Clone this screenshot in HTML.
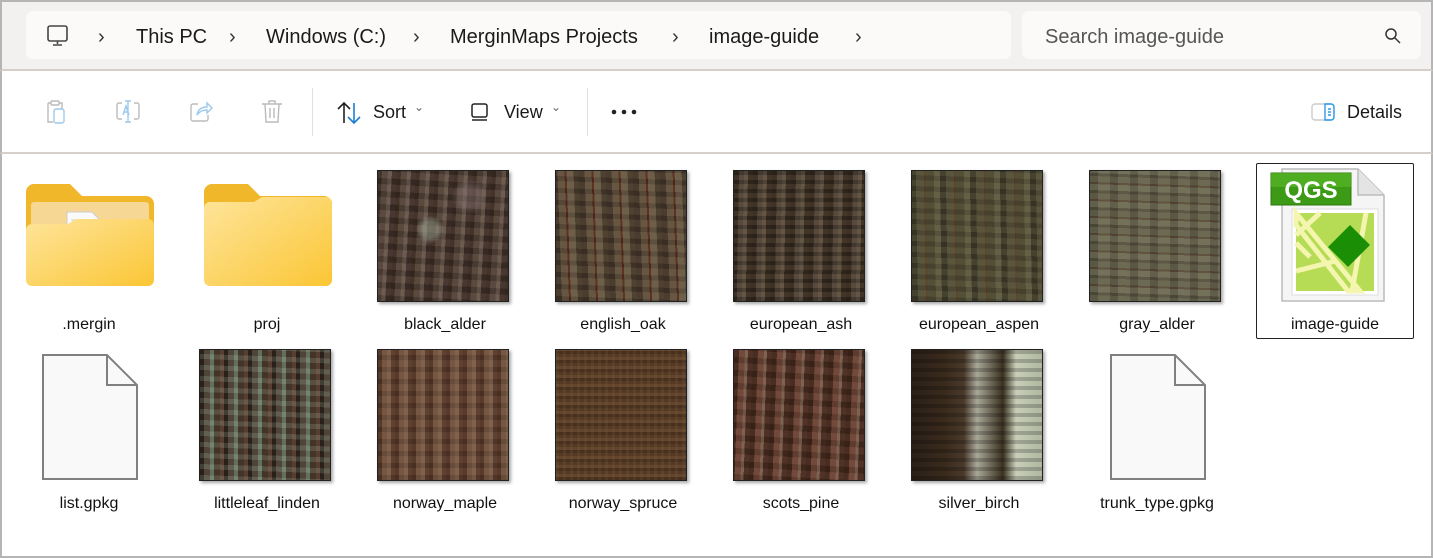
<!DOCTYPE html>
<html><head><meta charset="utf-8"><style>
*{margin:0;padding:0;box-sizing:border-box}
body{width:1433px;height:558px;overflow:hidden;background:#fff;font-family:"Segoe UI","Liberation Sans",sans-serif;position:relative;color:#1a1a1a}
.a{position:absolute}
.top{left:0;top:0;width:1433px;height:71px;background:#f3f1ef;border-top:2px solid #b5b5b5;border-bottom:2px solid #d6cfc9;border-left:2px solid #b5b5b5;border-right:2px solid #b5b5b5}
.addr{left:26px;top:11px;width:985px;height:48px;background:#fbfaf9;border-radius:7px}
.srch{left:1022px;top:11px;width:399px;height:48px;background:#fbfaf9;border-radius:7px}
.t{font-size:20px;line-height:24px}
.tb{left:0;top:71px;width:1433px;height:83px;background:#fff;border-bottom:2px solid #d6cfc9;border-left:2px solid #b5b5b5;border-right:2px solid #b5b5b5}
.lbl{font-size:16px;width:178px;text-align:center;color:#111}
.th{width:132px;height:132px;box-shadow:2px 2px 3px rgba(0,0,0,.35);border:1px solid #222}
.th>div{width:100%;height:100%}
.frame{left:0;top:154px;width:1433px;height:404px;border-left:2px solid #b5b5b5;border-right:2px solid #b5b5b5;border-bottom:2px solid #b5b5b5}
.r1{top:316px}.r2{top:495px}
</style></head><body>
<div class="a top"></div>
<div class="a addr"></div>
<div class="a srch"></div>
<svg class="a" style="left:46px;top:24px" width="24" height="24" viewBox="0 0 24 24" fill="none" stroke="#444" stroke-width="1.6"><rect x="2" y="2" width="19" height="15" rx="2"/><path d="M11.5 17v3M7 21h9"/></svg>
<div class="a t" style="left:98px;top:25px;color:#333">›</div>
<div class="a t" style="left:136px;top:25px">This PC</div>
<div class="a t" style="left:229px;top:25px;color:#333">›</div>
<div class="a t" style="left:266px;top:25px">Windows (C:)</div>
<div class="a t" style="left:413px;top:25px;color:#333">›</div>
<div class="a t" style="left:450px;top:25px">MerginMaps Projects</div>
<div class="a t" style="left:672px;top:25px;color:#333">›</div>
<div class="a t" style="left:709px;top:25px">image-guide</div>
<div class="a t" style="left:855px;top:25px;color:#333">›</div>
<div class="a t" style="left:1045px;top:25px;color:#555">Search image-guide</div>
<svg class="a" style="left:1384px;top:27px" width="18" height="18" viewBox="0 0 18 18" fill="none" stroke="#333" stroke-width="1.5"><circle cx="7" cy="7" r="5"/><path d="M11 11l5 5"/></svg>
<div class="a tb"></div>
<svg class="a" style="left:44px;top:99px" width="24" height="26" viewBox="0 0 24 26" fill="none" stroke-width="1.4"><path d="M4 4h3M15 4h3V10M4 4v19h5" stroke="#bbb"/><rect x="7" y="2" width="8" height="4" rx="1" stroke="#bbb"/><rect x="10" y="10" width="10" height="14" rx="2" stroke="#9cc9ee"/></svg>
<svg class="a" style="left:115px;top:100px" width="26" height="24" viewBox="0 0 26 24" fill="none" stroke-width="1.4"><path d="M7 3H4a2 2 0 0 0-2 2v12a2 2 0 0 0 2 2h3M19 3h3a2 2 0 0 1 2 2v12a2 2 0 0 1-2 2h-3" stroke="#bbb"/><path d="M13 1v21M10 1h6M10 22h6M8 15l3-9 3 9M9 12h4" stroke="#9cc9ee"/></svg>
<svg class="a" style="left:188px;top:100px" width="26" height="24" viewBox="0 0 26 24" fill="none" stroke-width="1.4"><path d="M10 4H5a2 2 0 0 0-2 2v13a2 2 0 0 0 2 2h13a2 2 0 0 0 2-2v-4" stroke="#bbb"/><path d="M9 15c1-6 5-8 10-8V3l5 5-5 5V10c-4 0-7 1-10 5z" stroke="#9cc9ee"/></svg>
<svg class="a" style="left:260px;top:99px" width="24" height="26" viewBox="0 0 24 26" fill="none" stroke="#bbb" stroke-width="1.4"><path d="M2 5h20M9 5V2h6v3M5 5l1 18h12l1-18M10 9v10M14 9v10"/></svg>
<div class="a" style="left:312px;top:88px;width:1px;height:48px;background:#e0e0e0"></div>
<svg class="a" style="left:336px;top:101px" width="28" height="24" viewBox="0 0 28 24" fill="none" stroke-width="1.6"><path d="M8 22V2M2 8l6-6 6 6" stroke="#222"/><path d="M18 2v20M12 16l6 6 6-6" stroke="#1a7fd4"/></svg>
<div class="a" style="left:373px;top:102px;font-size:18px">Sort</div>
<div class="a" style="left:414px;top:100px;font-size:12px;color:#666">⌄</div>
<svg class="a" style="left:470px;top:102px" width="20" height="20" viewBox="0 0 20 20" fill="none" stroke="#222" stroke-width="1.5"><rect x="2" y="2" width="15" height="13" rx="2"/><path d="M2 18h15"/></svg>
<div class="a" style="left:504px;top:102px;font-size:18px">View</div>
<div class="a" style="left:551px;top:100px;font-size:12px;color:#666">⌄</div>
<div class="a" style="left:587px;top:88px;width:1px;height:48px;background:#e0e0e0"></div>
<svg class="a" style="left:611px;top:109px" width="26" height="6" viewBox="0 0 26 6" fill="#222"><circle cx="3" cy="3" r="2.3"/><circle cx="13" cy="3" r="2.3"/><circle cx="23" cy="3" r="2.3"/></svg>
<svg class="a" style="left:1311px;top:102px" width="26" height="20" viewBox="0 0 26 20" fill="none" stroke-width="1.4"><rect x="1" y="2" width="22" height="16" rx="3" stroke="#ccc"/><path d="M14 2h6a3 3 0 0 1 3 3v10a3 3 0 0 1-3 3h-6z" stroke="#2d9ce8"/><path d="M17 7h3M17 10h3M17 13h3" stroke="#2d9ce8"/></svg>
<div class="a" style="left:1347px;top:102px;font-size:18px">Details</div>
<div class="a frame"></div>

<defs></defs>
<svg width="0" height="0" style="position:absolute"><defs><linearGradient id="g1" x1="0" y1="0" x2="1" y2="1"><stop offset="0" stop-color="#fee59b"/><stop offset="1" stop-color="#fbc635"/></linearGradient></defs></svg>
<!-- row 1 -->
<svg class="a" style="left:26px;top:184px" width="128" height="102" viewBox="0 0 128 102"><path d="M0 8a8 8 0 0 1 8-8h36l12 12h64a8 8 0 0 1 8 8v74a8 8 0 0 1-8 8H8a8 8 0 0 1-8-8z" fill="#f0b72a"/><rect x="5" y="18" width="118" height="60" rx="3" fill="#f6d894"/><path d="M41 28h25l12 12v30H41z" fill="#fafafa" stroke="#ccc"/><path d="M45 36h20M45 40h28M45 44h28M45 48h28M45 52h28M45 56h28M45 60h28" stroke="#bbb" stroke-width=".8"/><path d="M0 46a6 6 0 0 1 6-6h36l8 -5h72a6 6 0 0 1 6 6v55a6 6 0 0 1-6 6H6a6 6 0 0 1-6-6z" fill="url(#g1)"/></svg>
<svg class="a" style="left:204px;top:184px" width="128" height="102" viewBox="0 0 128 102"><path d="M0 8a8 8 0 0 1 8-8h36l12 12h64a8 8 0 0 1 8 8v74a8 8 0 0 1-8 8H8a8 8 0 0 1-8-8z" fill="#f0b72a"/><path d="M0 24a6 6 0 0 1 6-6h44l8-5h64a6 6 0 0 1 6 6v77a6 6 0 0 1-6 6H6a6 6 0 0 1-6-6z" fill="url(#g1)"/></svg>
<div class="a lbl r1" style="left:0">.mergin</div>
<div class="a lbl r1" style="left:178px">proj</div>

<div class="a th" style="left:377px;top:170px;background:repeating-linear-gradient(93deg,#3a2c22 0 4px,#54443a 4px 10px,#6b5a4e 10px 14px,#40302a 14px 19px)"><div style="background:radial-gradient(circle at 40% 45%,rgba(170,180,160,.45) 0 8px,transparent 14px),radial-gradient(circle at 70% 20%,rgba(140,120,120,.4) 0 10px,transparent 18px),repeating-linear-gradient(3deg,rgba(0,0,0,.15) 0 6px,rgba(120,100,90,.15) 6px 13px)"></div></div>
<div class="a lbl r1" style="left:356px">black_alder</div>
<div class="a th" style="left:555px;top:170px;background:repeating-linear-gradient(88deg,#44362a 0 6px,#64543f 6px 13px,#5a2a1c 13px 15px,#6e5e4a 15px 22px,#4a3c2c 22px 27px)"><div style="background:repeating-linear-gradient(2deg,rgba(0,0,0,.15) 0 5px,rgba(110,100,80,.15) 5px 12px)"></div></div>
<div class="a lbl r1" style="left:534px">english_oak</div>
<div class="a th" style="left:733px;top:170px;background:repeating-linear-gradient(91deg,#342a1e 0 5px,#54463a 5px 10px,#625444 10px 14px,#3a2e22 14px 19px)"><div style="background:repeating-linear-gradient(0deg,rgba(0,0,0,.2) 0 4px,rgba(110,95,75,.15) 4px 9px)"></div></div>
<div class="a lbl r1" style="left:712px">european_ash</div>
<div class="a th" style="left:911px;top:170px;background:repeating-linear-gradient(89deg,#3e3a2a 0 6px,#56523a 6px 14px,#643a22 14px 15px,#4e4a33 15px 24px,#625e44 24px 30px)"><div style="background:repeating-linear-gradient(2deg,rgba(0,0,0,.12) 0 5px,rgba(110,110,80,.15) 5px 11px)"></div></div>
<div class="a lbl r1" style="left:890px">european_aspen</div>
<div class="a th" style="left:1089px;top:170px;background:repeating-linear-gradient(2deg,#66644e 0 6px,#54503e 6px 9px,#6e6c56 9px 15px,#5a4a38 15px 17px)"><div style="background:repeating-linear-gradient(90deg,rgba(0,0,0,.12) 0 8px,rgba(160,160,130,.1) 8px 20px)"></div></div>
<div class="a lbl r1" style="left:1068px">gray_alder</div>

<div class="a" style="left:1256px;top:163px;width:158px;height:176px;border:1px solid #222;border-radius:2px"></div>
<svg class="a" style="left:1270px;top:167px" width="120" height="140" viewBox="0 0 120 140"><path d="M12 2h76l26 26v106H12z" fill="#f5f5f5" stroke="#bbb" stroke-width="1.5"/><path d="M88 2v26h26" fill="#e4e4e4" stroke="#bbb" stroke-width="1.5"/><rect x="22" y="42" width="86" height="86" fill="#fff" stroke="#ddd"/><rect x="26" y="46" width="78" height="78" fill="#b6dc55"/><path d="M26 58l52 66h12L26 46zM26 104l40-10M96 46l-14 78M26 76l14 14M50 46l-24 22" stroke="#f4f6b0" stroke-width="5" fill="none"/><path d="M58 80l22-22 20 20-22 22z" fill="#1a8f05"/><rect x="1" y="6" width="80" height="32" fill="#3c9a16" stroke="#2b7a0c"/><rect x="1" y="6" width="80" height="14" fill="#5cbb2a" opacity=".6"/><text x="41" y="31" text-anchor="middle" font-family="Liberation Sans,sans-serif" font-weight="bold" font-size="24" fill="#fff">QGS</text></svg>
<div class="a lbl r1" style="left:1246px">image-guide</div>

<!-- row 2 -->
<svg class="a" style="left:42px;top:354px" width="96" height="126" viewBox="0 0 96 126"><path d="M1 1h64l30 30v94H1z" fill="#f9f9f9" stroke="#808080" stroke-width="2"/><path d="M65 1v30h30" fill="none" stroke="#808080" stroke-width="2"/></svg>
<div class="a lbl r2" style="left:0">list.gpkg</div>
<div class="a th" style="left:199px;top:349px;background:repeating-linear-gradient(90deg,#2e241c 0 4px,#584c3e 4px 10px,#6e7a66 10px 14px,#4a3a2c 14px 20px,#604636 20px 24px)"><div style="background:repeating-linear-gradient(2deg,rgba(140,170,150,.2) 0 5px,rgba(0,0,0,.1) 5px 11px)"></div></div>
<div class="a lbl r2" style="left:178px">littleleaf_linden</div>
<div class="a th" style="left:377px;top:349px;background:repeating-linear-gradient(90deg,#503426 0 4px,#72543f 4px 9px,#7e604c 9px 13px,#5a3c2c 13px 17px)"><div style="background:repeating-linear-gradient(0deg,rgba(0,0,0,.1) 0 5px,rgba(140,110,90,.1) 5px 12px)"></div></div>
<div class="a lbl r2" style="left:356px">norway_maple</div>
<div class="a th" style="left:555px;top:349px;background:repeating-linear-gradient(0deg,#4a2e1e 0 3px,#64442e 3px 6px,#563824 6px 9px)"><div style="background:repeating-linear-gradient(90deg,rgba(100,110,60,.2) 0 3px,transparent 3px 7px)"></div></div>
<div class="a lbl r2" style="left:534px">norway_spruce</div>
<div class="a th" style="left:733px;top:349px;background:repeating-linear-gradient(92deg,#42281c 0 5px,#704636 5px 11px,#7e6252 11px 14px,#4a2c20 14px 19px)"><div style="background:repeating-linear-gradient(3deg,rgba(0,0,0,.15) 0 6px,rgba(130,100,90,.1) 6px 13px)"></div></div>
<div class="a lbl r2" style="left:712px">scots_pine</div>
<div class="a th" style="left:911px;top:349px;background:linear-gradient(90deg,#2a2018 0,#3a2a1c 25%,#4a3a2c 40%,#a8a898 50%,#3a3020 70%,#c8ceb8 80%,#b0b8a0 100%)"><div style="background:repeating-linear-gradient(0deg,rgba(0,0,0,.2) 0 4px,transparent 4px 9px)"></div></div>
<div class="a lbl r2" style="left:890px">silver_birch</div>
<svg class="a" style="left:1110px;top:354px" width="96" height="126" viewBox="0 0 96 126"><path d="M1 1h64l30 30v94H1z" fill="#f9f9f9" stroke="#808080" stroke-width="2"/><path d="M65 1v30h30" fill="none" stroke="#808080" stroke-width="2"/></svg>
<div class="a lbl r2" style="left:1068px">trunk_type.gpkg</div>
</body></html>
